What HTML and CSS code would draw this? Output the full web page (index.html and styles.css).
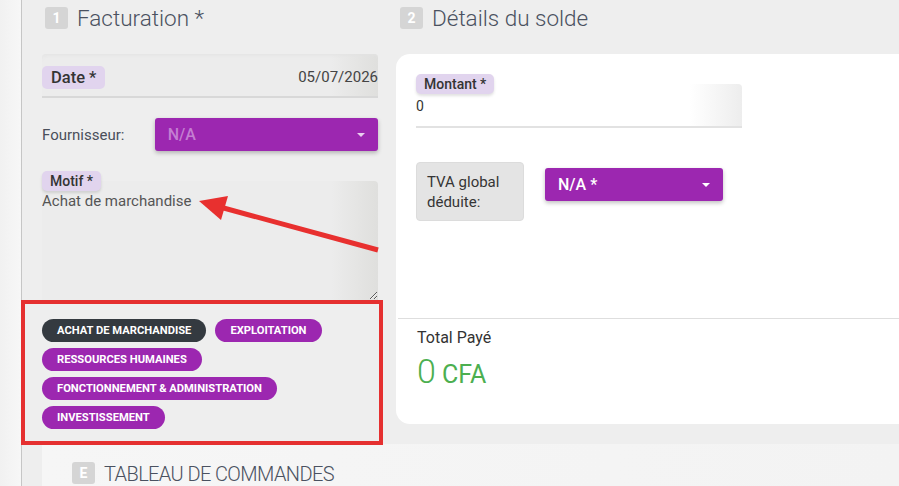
FILE: index.html
```html
<!doctype html>
<html lang="fr">
  <head>
    <meta charset="utf-8"/>
    <title>Facturation</title>
    <link rel="stylesheet" href="styles.css">
  </head>
  <body>
    <div class="page">
      <aside class="rail"></aside>
      <main class="main">
        <div class="columns">
          <section class="col-left">
            <div class="step-head">
              <span class="step-badge">1</span>
              <h2 class="step-title">Facturation *</h2>
            </div>
            <div class="date-field">
              <span class="chip-label chip-date">Date *</span>
              <span class="date-value">05/07/2026</span>
            </div>
            <div class="supplier-row">
              <span class="supplier-label">Fournisseur:</span>
              <div class="select select-muted">N/A<span class="caret"></span></div>
            </div>
            <span class="chip-label chip-small">Motif *</span>
            <textarea class="motif-input" readonly>Achat de marchandise</textarea>
            <div class="tags">
              <span class="tag tag-dark">Achat de marchandise</span>
              <span class="tag">Exploitation</span>
              <span class="tag">Ressources humaines</span>
              <span class="tag">Fonctionnement &amp; administration</span>
              <span class="tag">Investissement</span>
            </div>
          </section>
          <section class="col-right">
            <div class="step-head">
              <span class="step-badge">2</span>
              <h2 class="step-title">Détails du solde</h2>
            </div>
            <div class="card">
              <div class="card-body">
                <span class="chip-label chip-small chip-raised">Montant *</span>
                <div class="amount-field">0</div>
                <div class="tva-row">
                  <div class="tva-box">TVA global<br>déduite:</div>
                  <div class="select select-tva">N/A *<span class="caret"></span></div>
                </div>
              </div>
              <div class="total">
                <div class="total-label">Total Payé</div>
                <div class="total-value"><span class="total-num">0</span> CFA</div>
              </div>
            </div>
          </section>
        </div>
        <section class="orders">
          <div class="step-head">
            <span class="step-badge">E</span>
            <h2 class="step-title orders-title">TABLEAU DE COMMANDES</h2>
          </div>
        </section>
      </main>
      <div class="annot-box"></div>
      <svg class="annot-arrow" width="899" height="486" viewBox="0 0 899 486">
        <line x1="378" y1="250" x2="220" y2="207" stroke="#e8302f" stroke-width="5"/>
        <polygon points="199,201 228,196 221,220" fill="#e8302f"/>
      </svg>
    </div>
  </body>
</html>
```

FILE: styles.css
```css
* {
  box-sizing: border-box;
  font-family: Roboto, "Liberation Sans", sans-serif;
}
html, body {
  margin: 0;
  height: 100%;
  overflow: hidden;
}
body {
  background: #eeeeee;
}
.page {
  position: relative;
  display: flex;
  height: 486px;
  overflow: hidden;
}
.rail {
  width: 22px;
  flex: none;
  background: linear-gradient(to right, #f1f1f1, #f7f7f7);
  border-right: 1px solid #c6c6c6;
}
.main {
  flex: 1;
  padding-left: 20px;
  background: #eeeeee;
}
.columns {
  display: flex;
  gap: 18px;
  height: 444px;
}
.col-left {
  width: 336px;
  flex: none;
  display: flex;
  flex-direction: column;
  align-items: flex-start;
}
.col-right {
  flex: 1;
}
.step-head {
  display: flex;
  align-items: flex-start;
  gap: 9px;
  padding-top: 7px;
  height: 54px;
  align-self: stretch;
}
.step-badge {
  width: 23px;
  height: 22px;
  margin-left: 3px;
  border-radius: 3px;
  background: #d5d5d5;
  color: #ffffff;
  font-size: 14px;
  font-weight: 700;
  display: flex;
  align-items: center;
  justify-content: center;
}
.col-right .step-badge {
  margin-left: 4px;
}
.step-title {
  margin: 0;
  font-size: 22.5px;
  line-height: 22px;
  font-weight: 300;
  color: #4a5160;
}
.date-field {
  align-self: stretch;
  height: 44px;
  display: flex;
  align-items: center;
  justify-content: space-between;
  padding-top: 4px;
  border-radius: 4px 4px 0 0;
  background: linear-gradient(to right, #ececec 86%, #dfdfdd 100%);
  box-shadow: inset 0 4px 4px -3px #e2e2e2;
  border-bottom: 2px solid #d8d8d8;
}
.chip-label {
  display: inline-flex;
  align-items: center;
  background: #e1d4ee;
  color: #343434;
  font-weight: 500;
  border-radius: 5px;
}
.chip-date {
  height: 23px;
  padding: 0 9px;
  font-size: 16.5px;
}
.chip-small {
  position: relative;
  z-index: 1;
  height: 20px;
  padding: 0 8px;
  font-size: 14px;
  margin-top: 20px;
  box-shadow: 0 2px 3px rgba(0, 0, 0, 0.12);
}
.date-value {
  font-size: 15px;
  color: #444444;
}
.supplier-row {
  display: flex;
  align-items: center;
  align-self: stretch;
  margin-top: 20px;
}
.supplier-label {
  width: 113px;
  font-size: 15px;
  color: #4a4f5a;
}
.select {
  position: relative;
  height: 33px;
  border-radius: 3px;
  background: #9c27b0;
  box-shadow: 0 2px 4px rgba(0, 0, 0, 0.25);
  display: flex;
  align-items: center;
  padding-left: 13px;
  font-size: 16px;
  font-weight: 500;
}
.select-muted {
  width: 224px;
  color: #c47ed2;
}
.select-tva {
  width: 178px;
  margin-top: 6px;
  color: #ffffff;
}
.caret {
  position: absolute;
  right: 13px;
  top: 15px;
  border-left: 4px solid transparent;
  border-right: 4px solid transparent;
  border-top: 4px solid #e8cfee;
}
.select-tva .caret {
  border-top-color: #ffffff;
}
.motif-input {
  align-self: stretch;
  height: 119px;
  margin: -10px 0 0;
  padding: 11px 0 0;
  border: none;
  outline: none;
  resize: vertical;
  border-radius: 4px 4px 0 0;
  background: linear-gradient(to right, #ececec 86%, #dfdfdd 100%);
  font-size: 15px;
  color: #555555;
  line-height: 18px;
}
.tags {
  display: flex;
  flex-wrap: wrap;
  gap: 6px 9px;
  margin-top: 19px;
}
.tag {
  height: 23px;
  padding: 0 15px;
  border-radius: 12px;
  background: #9c27b0;
  color: #ffffff;
  font-size: 11.2px;
  font-weight: 700;
  text-transform: uppercase;
  display: inline-flex;
  align-items: center;
}
.tag-dark {
  background: #343a40;
}
.card {
  background: #ffffff;
  border-radius: 14px 0 0 14px;
  height: 370px;
}
.card-body {
  height: 264px;
  padding: 20px 0 0 20px;
  display: flex;
  flex-direction: column;
  align-items: flex-start;
}
.chip-raised {
  margin-top: 0;
}
.amount-field {
  width: 326px;
  height: 44px;
  margin-top: -10px;
  padding-top: 14px;
  font-size: 14px;
  color: #333333;
  border-radius: 4px 4px 0 0;
  background: linear-gradient(to right, #ffffff 84%, #ededed 100%);
  border-bottom: 2px solid #e2e2e2;
}
.tva-row {
  display: flex;
  align-items: flex-start;
  gap: 21px;
  margin-top: 34px;
}
.tva-box {
  width: 108px;
  height: 59px;
  padding: 9px 10px 0;
  background: #e4e4e4;
  border: 1px solid #dcdcdc;
  border-radius: 4px;
  font-size: 15px;
  line-height: 20px;
  color: #353535;
}
.total {
  border-top: 1px solid #dedede;
  margin-left: 2px;
  padding: 9px 19px 0;
}
.total-label {
  font-size: 16px;
  color: #333333;
}
.total-value {
  margin-top: 4px;
  font-size: 25px;
  color: #4caf50;
  line-height: 40px;
}
.total-num {
  font-size: 34px;
  font-weight: 300;
}
.orders {
  height: 42px;
  padding: 18px 27px 0;
  background: linear-gradient(to right, #f6f6f6, #f3f3f3);
}
.orders .step-head {
  padding-top: 0;
}
.orders-title {
  font-size: 20px;
  font-weight: 300;
  line-height: 24px;
  letter-spacing: -0.6px;
}
.annot-box {
  position: absolute;
  left: 21px;
  top: 300px;
  width: 362px;
  height: 145px;
  border: 4px solid #e53030;
}
.annot-arrow {
  position: absolute;
  left: 0;
  top: 0;
  pointer-events: none;
}
```
